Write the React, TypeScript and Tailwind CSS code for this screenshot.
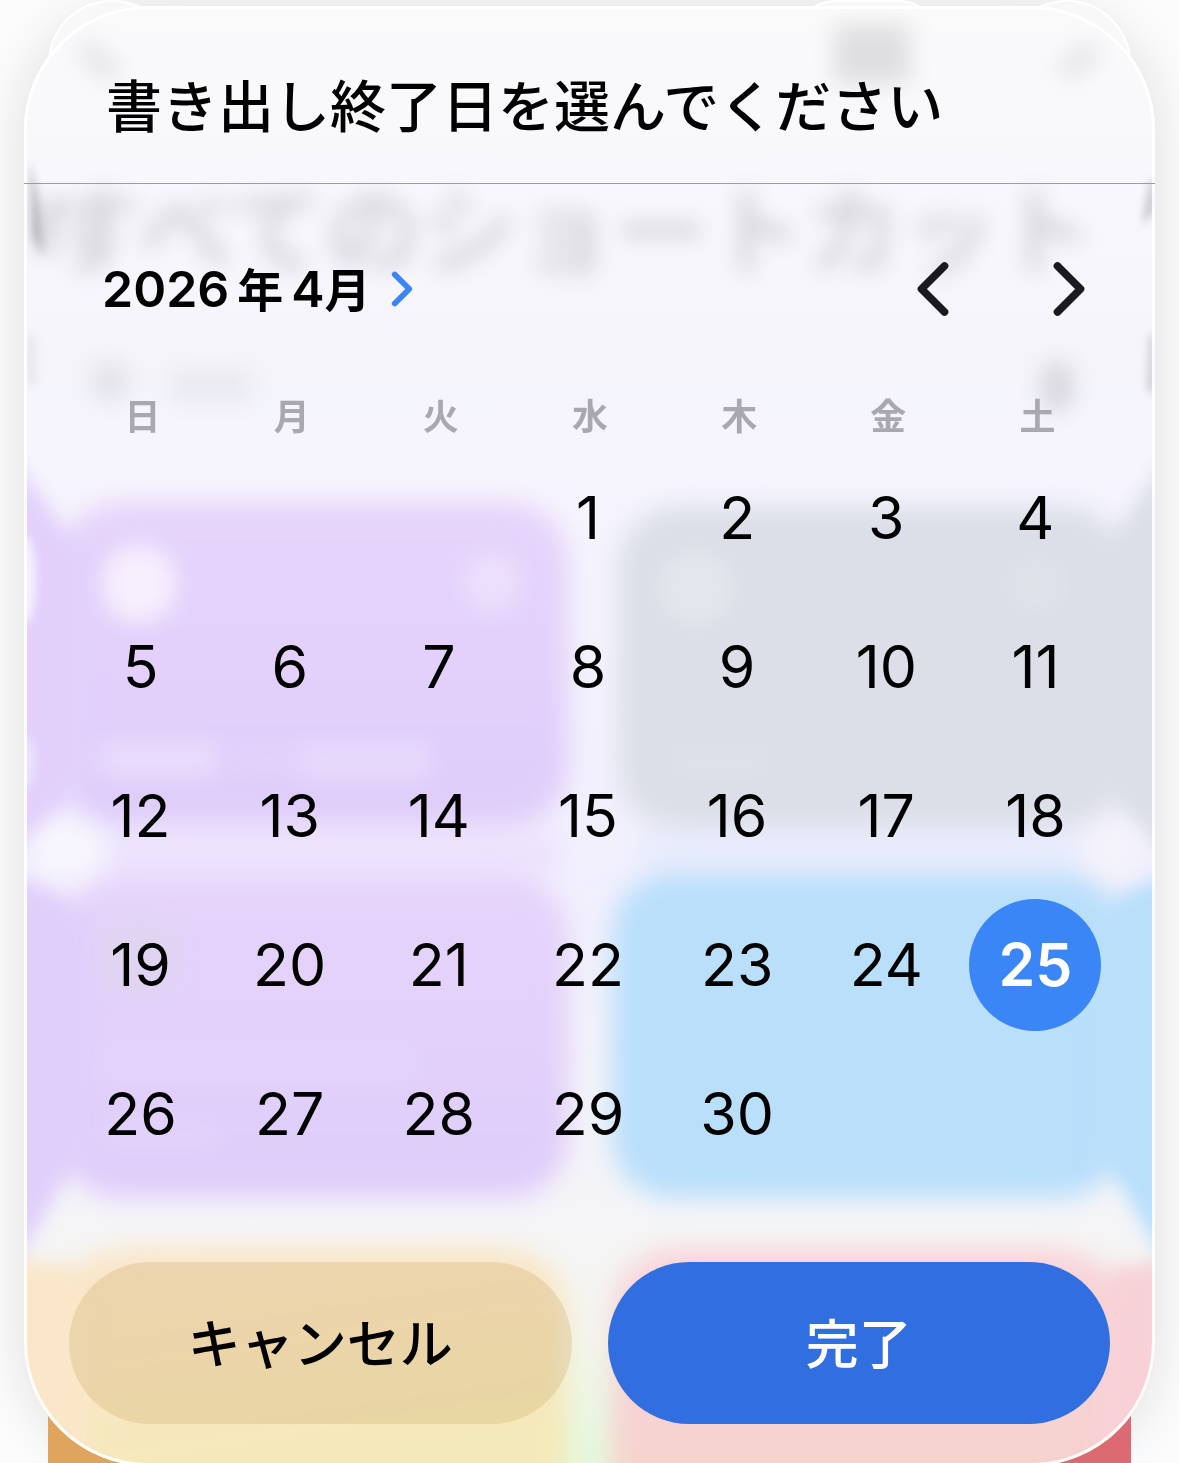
import React, { useState } from "react";
import { ChevronLeft, ChevronRight } from "lucide-react";

const weekdays = ["日", "月", "火", "水", "木", "金", "土"];

// April 2026 starts on a Wednesday
const firstWeekday = 3;
const daysInMonth = 30;

const weeks: (number | null)[][] = [];
for (let start = 1 - firstWeekday; start <= daysInMonth; start += 7) {
  weeks.push(
    Array.from({ length: 7 }, (_, i) => {
      const day = start + i;
      return day >= 1 && day <= daysInMonth ? day : null;
    })
  );
}

// Out-of-focus shortcut tiles seen through the glass sheet
const GlassBackdrop: React.FC = () => (
  <svg
    className="absolute inset-0 size-full"
    viewBox="24 6 1131 1460"
    preserveAspectRatio="none"
    aria-hidden="true"
  >
    <defs>
      <filter id="soft" x="-20%" y="-20%" width="140%" height="140%">
        <feGaussianBlur stdDeviation="13" />
      </filter>
      <filter id="smudge" x="-50%" y="-50%" width="200%" height="200%">
        <feGaussianBlur stdDeviation="11" />
      </filter>
      <filter id="bend" x="-50%" y="-20%" width="200%" height="140%">
        <feGaussianBlur stdDeviation="9" />
      </filter>
      <filter id="edge" x="-100%" y="-20%" width="300%" height="140%">
        <feGaussianBlur stdDeviation="4" />
      </filter>
      <linearGradient id="base" x1="0" y1="0" x2="0" y2="1">
        <stop offset="0" stopColor="#fafafb" />
        <stop offset="0.18" stopColor="#f7f6fc" />
        <stop offset="0.24" stopColor="#f4f4fa" />
        <stop offset="0.31" stopColor="#f6f5fe" />
        <stop offset="0.6" stopColor="#f1effd" />
        <stop offset="0.83" stopColor="#f5f5f7" />
        <stop offset="0.9" stopColor="#f4f5f0" />
        <stop offset="1" stopColor="#e4f8dc" />
      </linearGradient>
      <linearGradient id="purple" x1="0" y1="0" x2="0" y2="1">
        <stop offset="0" stopColor="#e6d4fb" />
        <stop offset="1" stopColor="#dfcdfa" />
      </linearGradient>
      <linearGradient id="orange" x1="0" y1="0" x2="0.3" y2="1">
        <stop offset="0" stopColor="#fbe5ca" />
        <stop offset="0.4" stopColor="#f9e6c4" />
        <stop offset="0.9" stopColor="#f4e9ba" />
      </linearGradient>
      <linearGradient id="pink" x1="0" y1="0" x2="0" y2="1">
        <stop offset="0" stopColor="#f9d4da" />
        <stop offset="0.5" stopColor="#f6d2d4" />
        <stop offset="1" stopColor="#f6d3ca" />
      </linearGradient>
    </defs>
    <rect x="24" y="6" width="1131" height="1460" fill="url(#base)" />

    {/* Page title and search field */}
    <g filter="url(#smudge)" fill="#000">
      <text
        x="48"
        y="266"
        fontSize="96"
        fontWeight="700"
        fontFamily="'Noto Sans CJK JP', sans-serif"
        opacity="0.14"
      >
        すべてのショートカット
      </text>
      <rect x="834" y="24" width="76" height="60" opacity="0.1" />
      <path d="M82 46l34 30M1062 74l34-26" stroke="#000" strokeWidth="22" opacity="0.08" />
      <circle cx="110" cy="382" r="20" opacity="0.07" />
      <rect x="170" y="368" width="82" height="36" opacity="0.04" />
      <rect x="1042" y="362" width="30" height="50" rx="15" opacity="0.12" />
      <rect x="34" y="200" width="24" height="54" opacity="0.12" />
    </g>
    <g filter="url(#edge)" fill="#000">
      <path d="M29 160l8 30 6 66-10-20z" opacity="0.22" />
      <path d="M1155 180l-5 0-8 46 13-16zM1155 335l-5 0-2 55 7 5z" opacity="0.2" />
      <path d="M26 335h10v50H26z" opacity="0.05" />
    </g>

    {/* Tiles */}
    <g filter="url(#soft)">
      <rect x="110" y="834" width="450" height="40" fill="#ece2fd" />
      <rect x="640" y="834" width="440" height="40" fill="#e7ecfc" />
      <rect x="60" y="502" width="508" height="324" rx="60" fill="url(#purple)" />
      <rect x="618" y="506" width="506" height="322" rx="60" fill="#dcdfe8" />
      <rect x="60" y="876" width="508" height="322" rx="60" fill="url(#purple)" />
      <rect x="612" y="874" width="510" height="324" rx="60" fill="#b9dffb" />
      <path d="M50 1340q0-92 90-92h352q76 0 76 76v180H50z" fill="url(#orange)" />
      <path d="M612 1324q0-76 76-76h352q90 0 90 92v160H612z" fill="url(#pink)" />
    </g>

    {/* Light bent round the rim */}
    <g filter="url(#bend)">
      <path d="M10 454l54 74 26 20v230l-26 28-54 54z" fill="#e2d0fb" />
      <path d="M10 872l54 24 26 24v236l-26 26-54 90z" fill="#e0cffb" />
      <path d="M1170 454l-52 74-26 20v230l26 28 52 54z" fill="#dcdfe8" />
      <path d="M1170 872l-52 24-26 24v236l26 26 52 90z" fill="#b9dffb" />
      <path d="M10 1260q40 2 64 8l16 40v176H10z" fill="#fae6c8" />
      <path d="M1170 1262q-30 0-60 8l-18 40v176h78z" fill="#f7d1d5" />
    </g>
    <g filter="url(#smudge)">
      <ellipse cx="66" cy="850" rx="34" ry="26" fill="#f8f5fd" />
      <ellipse cx="1114" cy="848" rx="26" ry="24" fill="#f4f3fb" />
    </g>
    <g filter="url(#edge)">
      <ellipse cx="26" cy="580" rx="10" ry="44" fill="#f6f0fe" />
      <ellipse cx="26" cy="762" rx="9" ry="26" fill="#ece2fd" />
    </g>

    {/* Tile icons and labels */}
    <g filter="url(#smudge)" fill="#fff">
      <rect x="102" y="546" width="74" height="76" rx="34" opacity="0.65" />
      <circle cx="492" cy="582" r="30" opacity="0.3" />
      <rect x="98" y="742" width="120" height="34" opacity="0.3" />
      <rect x="235" y="746" width="60" height="26" opacity="0.12" />
      <rect x="300" y="744" width="130" height="34" opacity="0.26" />
      <circle cx="696" cy="588" r="38" opacity="0.24" />
      <circle cx="1036" cy="586" r="28" opacity="0.12" />
      <rect x="670" y="746" width="100" height="30" opacity="0.08" />
      <rect x="100" y="920" width="78" height="74" rx="30" fill="#dcd8e8" opacity="0.5" />
      <rect x="98" y="1050" width="320" height="26" opacity="0.12" />
      <rect x="98" y="1122" width="120" height="26" opacity="0.12" />
    </g>
  </svg>
);

const App: React.FC = () => {
  const [selected, setSelected] = useState(25);

  return (
    <main
      lang="ja"
      className="relative overflow-hidden bg-[#fcfcfc] px-6 pt-1.5 font-['Inter','Noto_Sans_CJK_JP',sans-serif] text-black"
    >
      <section
        role="dialog"
        aria-labelledby="dialog-title"
        className="relative -mb-[3px] rounded-[124px] shadow-[0_0_56px_rgba(0,0,0,0.12)]"
      >
        {/* Screen behind the sheet */}
        <div className="absolute -top-1.5 left-6 size-32 rounded-full border-2 border-white bg-[#f8f8f8]" />
        <div className="absolute -top-1.5 right-6 size-32 rounded-full border-2 border-white bg-[#f8f8f8]" />
        <div className="absolute -top-1.5 right-54 h-20 w-36 rounded-full border-2 border-white bg-[#f8f8f8]" />
        <div className="absolute bottom-0 left-6 h-24 w-1/3 bg-[#dfa55f]" />
        <div className="absolute right-6 bottom-0 h-24 w-1/3 bg-[#dc6a72]" />

        <div className="absolute inset-0 overflow-hidden rounded-[124px]">
          <GlassBackdrop />
        </div>
        <div className="pointer-events-none absolute inset-0 rounded-[124px] border-[3px] border-white/90" />

        <div className="relative">
          {/* Title */}
          <header className="flex h-[178px] items-center border-b border-[#9c9c9f] pt-6 pr-20 pl-[82px]">
            <h1 id="dialog-title" className="text-[56px] leading-none font-medium">
              書き出し終了日を選んでください
            </h1>
          </header>

          {/* Month navigation */}
          <div className="flex items-center justify-between pt-[59px] pr-10 pl-[78px]">
            <button type="button" className="flex items-center gap-0.5 text-[50px] leading-none font-semibold">
              <span>
                2026<span className="mx-2 text-[46px]">年</span>4<span className="text-[46px]">月</span>
              </span>
              <ChevronRight size={58} strokeWidth={2.4} className="text-[#3a86f7]" />
            </button>
            <div className="flex gap-11">
              <button type="button" aria-label="前の月">
                <ChevronLeft size={92} strokeWidth={2} className="text-[#1b1a1f]" />
              </button>
              <button type="button" aria-label="次の月">
                <ChevronRight size={92} strokeWidth={2} className="text-[#1b1a1f]" />
              </button>
            </div>
          </div>

          {/* Calendar */}
          <div className="mt-14 pr-[45px] pl-[42px]">
            <table className="w-full table-fixed">
              <thead>
                <tr>
                  {weekdays.map((name) => (
                    <th
                      key={name}
                      scope="col"
                      className="h-[52px] p-0 pl-1 text-center text-[36px] leading-none font-semibold text-[#a9a8ae]"
                    >
                      {name}
                    </th>
                  ))}
                </tr>
              </thead>
              <tbody>
                {weeks.map((week, row) => (
                  <tr key={row}>
                    {week.map((day, col) => (
                      <td key={col} className="h-[149px] p-0">
                        {day && (
                          <button
                            type="button"
                            aria-pressed={day === selected}
                            onClick={() => setSelected(day)}
                            className={
                              day === selected
                                ? "mx-auto flex size-[132px] items-center justify-center rounded-full bg-[#3a86f7] text-[59px] leading-none font-semibold text-white"
                                : "mx-auto flex size-[132px] items-center justify-center rounded-full text-[59px] leading-none"
                            }
                          >
                            {day}
                          </button>
                        )}
                      </td>
                    ))}
                  </tr>
                ))}
              </tbody>
            </table>
          </div>

          {/* Actions */}
          <div className="mt-[74px] grid grid-cols-2 gap-9 px-[45px] pb-[42px]">
            <button
              type="button"
              className="h-[162px] rounded-full bg-[#a87828]/16 pt-1 text-[53px] leading-none font-medium"
            >
              キャンセル
            </button>
            <button
              type="button"
              className="h-[162px] rounded-full bg-[#316fe1] pt-1 text-[53px] leading-none font-medium text-white"
            >
              完了
            </button>
          </div>
        </div>
      </section>
    </main>
  );
};

export default App;
